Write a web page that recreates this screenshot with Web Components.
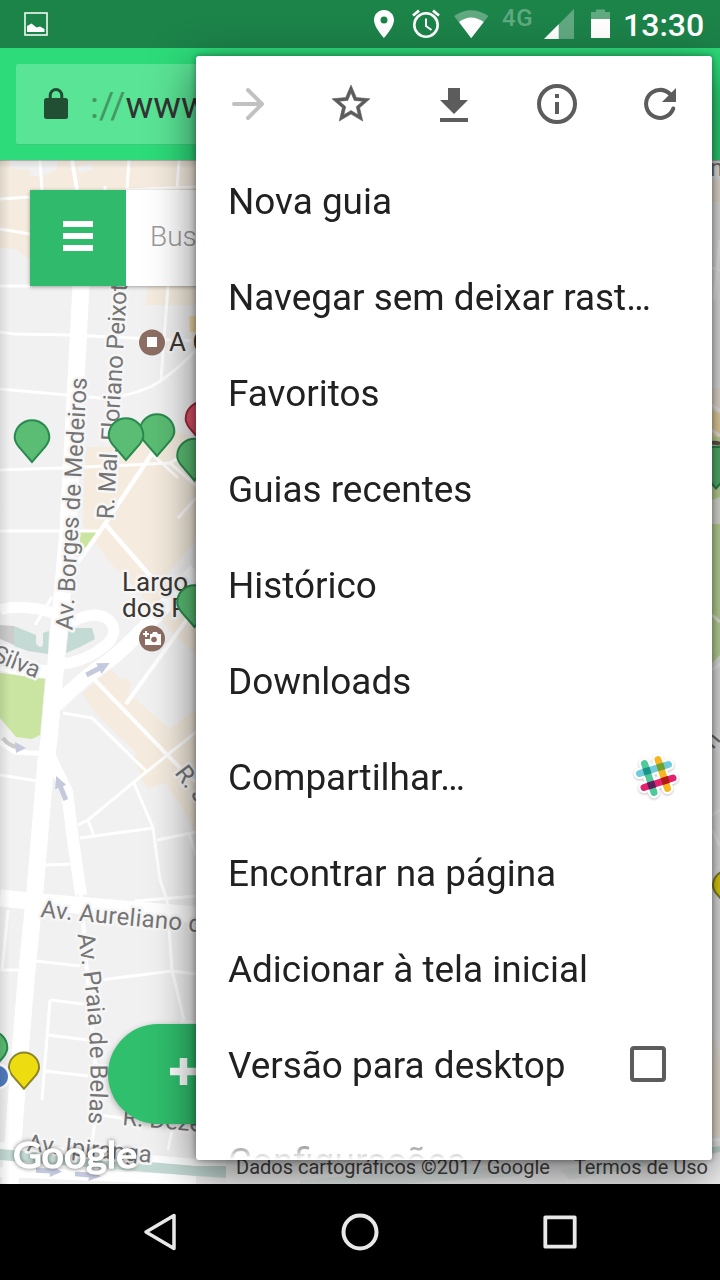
<!DOCTYPE html>
<html lang="pt-BR">
<head>
<meta charset="utf-8">
<title>Mapa</title>
<style>
  body { margin: 0; background: #000; font-family: Roboto, "Liberation Sans", sans-serif; }
</style>
</head>
<body>
<phone-screen></phone-screen>
<script>
const define = (name, html) => {
  const t = document.createElement('template');
  t.innerHTML = html;
  customElements.define(name, class extends HTMLElement {
    constructor() {
      super();
      this.attachShadow({ mode: 'open' }).append(t.content.cloneNode(true));
    }
  });
};

define('status-bar', `
<style>
  :host { display: flex; height: 48px; box-sizing: border-box; padding: 0 16px 0 24px; background: #1c8349; color: #fff; align-items: flex-start; }
  svg { display: block; flex: none; }
  .gap { flex: 1; }
  .net { font: 500 24px/24px Roboto, sans-serif; color: #61a981; margin: 6px 9px 0 13px; width: 33px; letter-spacing: .5px; }
  time { font: 500 32px/48px Roboto, sans-serif; margin: 1px 0 0 12px; width: 81px; }
</style>
<svg width="24" height="48"><rect x="1" y="13" width="22" height="22" fill="none" stroke="#e4f1e9" stroke-width="1.7"/><path d="M3 32V26L7.5 23.5 12.5 27.5 16 26.5 20.5 29V32Z" fill="#fff"/></svg>
<span class="gap"></span>
<svg width="20" height="48"><path fill="#fff" fill-rule="evenodd" d="M10 10C4.3 10 0 14.400 0 20c0 7.300 10 18 10 18s10-10.700 10-18c0-5.600-4.300-10-10-10zm0 6.400a3.500 3.500 0 1 1 0 7 3.500 3.500 0 0 1 0-7z"/></svg>
<svg width="28" height="48" style="margin-left:18px" fill="none" stroke="#fff"><circle cx="14" cy="25" r="11.700" stroke-width="2.600"/><path d="M14 18.500V26l5.500 4" stroke-width="2"/><path d="M1 15.500 7 10.700M27 15.500 21 10.700" stroke-width="2.800"/></svg>
<svg width="35" height="48" style="margin-left:14px"><path d="M0 16Q17 4.500 34.500 16L17.200 38Z" fill="#61a981"/><path d="M5 22Q17 13 29.700 22L17.200 38.300Z" fill="#fff"/></svg>
<span class="net">4G</span>
<svg width="30" height="48"><path d="M30 9V39H0Z" fill="#61a981"/><path d="M14.700 24.300V39H0Z" fill="#fff"/></svg>
<svg width="20" height="48" style="margin-left:17px"><path d="M0 12H5V9.500H14V12H19V20H0Z" fill="#61a981"/><path d="M0 19H19V38H0Z" fill="#fff"/></svg>
<time>13:30</time>
`);

define('url-toolbar', `
<style>
  :host { display: block; height: 112px; box-sizing: border-box; padding: 16px; background: #2ddb7a; }
  .field { height: 80px; background: #5ae495; border-radius: 2px; box-shadow: 0 1px 0 #3fc97b; display: flex; align-items: center; box-sizing: border-box; padding-left: 28px; }
  svg { display: block; margin-right: 20px; }
  .url { font-size: 37px; line-height: 44px; color: #333; white-space: pre; padding: 3px 0 0 2px; }
  .url i { font-style: normal; color: #459765; }
</style>
<div class="field">
  <svg width="24" height="32"><path d="M6.200 11V7.500a5.800 6 0 0 1 11.600 0V11" fill="none" stroke="#214f34" stroke-width="3"/><rect y="10" width="24" height="21" rx="2.500" fill="#214f34"/></svg>
  <span class="url"><i>://</i>www</span>
</div>
`);

define('street-map', `
<style>
  :host { display: block; height: 1024px; background: #f1f1f1; overflow: hidden; }
  svg { display: block; }
  text { font-family: Roboto, sans-serif; font-size: 24px; fill: #757575; paint-order: stroke; stroke: #f6f6f6; stroke-width: 5px; stroke-linejoin: round; }
  .poi { font-size: 26px; fill: #3c3732; }
  .logo { font: 400 36px Lato, sans-serif; fill: #fff; stroke: #fff; stroke-width: 1.500px; filter: drop-shadow(0 0 2px rgba(0,0,0,.55)); }
</style>
<svg width="720" height="1024" viewBox="0 160 720 1024">
  <defs>
    <path id="pin" d="M0 24.500L-13.500 9C-16 5.500-17.300 3-17.300 0A17.300 17.300 0 0 1 17.300 0C17.300 3 16 5.500 13.500 9Z"/>
    <path id="belas" d="M77.500 934Q96 1045 88 1126"/>
    <path id="arrow" d="M-13-2.500H1V-6L13 0 1 6V2.500H-13Z" fill="#c5c9dd"/>
    <linearGradient id="top" x1="0" y1="0" x2="0" y2="1"><stop stop-color="#555" stop-opacity=".6"/><stop offset=".2" stop-color="#777" stop-opacity=".15"/><stop offset="1" stop-opacity="0"/></linearGradient>
    <linearGradient id="side"><stop stop-opacity=".1"/><stop offset="1" stop-opacity="0"/></linearGradient>
  </defs>
  <g fill="#f5ecdf">
    <path d="M0 160H196V190H40V262L24 256 16 249 0 248Z"/>
    <path d="M148 286H196V305H145Z"/>
    <path d="M87 447H125L160 428 188 435 184 458 196 470V540L163 580 196 612V655L170 630 140 593 113 566 95 542 83 525 84 470Z"/>
    <path d="M82 694L110 669 122 680 126 677 132 685 128 692 169 729 196 709V835L185 812 165 783 148 789 142 780 134 757 137 753 110 728 95 712Z"/>
    <path d="M712 180H720V202H712ZM712 388H720V412H712ZM712 1030L720 1060V1137H712Z"/>
  </g>
  <path d="M189 316H196V332H190ZM712 410L720 414V437H712Z" fill="#f6e0ab"/>
  <path d="M10 160H57V170L43 176H30V170L10 168ZM77 167L92 163V170L78 173Z" fill="#f1f1f1"/>
  <g fill="#cae5a2"><path d="M80 531H98L80 556Z"/><path d="M0 673L45 679 40 735 32 739 16 737 0 718Z"/><path d="M712 437H720V655L712 663Z"/></g>
  <path d="M712 500L720 497V524H712Z" fill="#eef0e6"/>
  <g fill="none" stroke="#fff" stroke-width="3">
    <path d="M40 160L42 190M129 160L127 190M179 160L177 190M0 199L30 197M0 229L30 234M127 190L196 187M0 286H30M105 186V190"/>
    <path d="M72 160L77 190" stroke-width="4"/>
    <path d="M0 332L15 334 70 335 196 341M0 389L100 398Q125 398 150 387 170 377 196 350M168 286L161 380M0 470L62 468 130 465 170 463 196 486M170 463L188 452M153 455L178 478M0 531H98"/>
    <path d="M153 452L105 524 78 562M105 524L152 578" stroke-width="4.500"/>
    <path d="M178 518L196 498M52 597L35 625"/>
    <path d="M0 610Q12 606 30 608 48 609 62 618M70 623Q95 609 109 620 120 632 106 645 85 662 62 664" stroke-width="11"/>
    <path d="M0 664Q25 672 62 672" stroke-width="13"/>
    <path d="M56 705Q85 676 110 660 140 636 196 570" stroke-width="15"/>
    <path d="M0 742L15 752 50 754" stroke-width="5"/>
    <path d="M81 286L76 380 68 530 58 640 49 740 46 760 35 890 26 980 17 1090 10 1184" stroke-width="17"/>
    <path d="M46 748L67 792 73 840 81 895" stroke-width="12"/>
    <path d="M81 895L86 960 100 1115M90 675L180 768 196 782M126 704L188 618" stroke-width="4"/>
    <path d="M78 825L88 820 145 773 196 732M63 713L92 718 146 771M88 820L94 836M80 838L153 828M134 783L153 828 160 880 167 900M157 840L196 832M189 833L196 855M0 775L37 781M45 865L73 864"/>
    <path d="M0 898L40 902 196 915" stroke-width="17"/>
    <path d="M135 901L196 896M167 900L172 970 185 1024M100 980L172 971 196 974M36 961L80 966M8 910L2 970H20M50 1000L84 1004M50 1000L42 1100M47 1035L88 1040M45 1071L88 1076M100 1115L150 1122M95 1120L90 1160M172 1130L168 1150M180 1022H196"/>
    <path d="M0 1146L196 1163 240 1163" stroke-width="8"/>
    <path d="M0 1172L196 1180" stroke-width="10"/>
    <path d="M712 268L720 270M714 300L720 240M712 615L720 622M712 405L720 411M712 430L720 436M712 670L720 664M712 1140H720M712 815L720 810M712 830L720 846" stroke-width="3" stroke-opacity=".8"/>
  </g>
  <path d="M14 626L36 635V643Q40 650 43 645V633L49 631 48 654 28 651 14 646ZM69 628L92 628 95 639 80 647 66 653Z" fill="#c4dad4"/>
  <path d="M0 625L14 626V645L0 639Z" fill="#ccc"/>
  <path d="M0 1149L196 1166H226V1178L196 1176 0 1160ZM300 1180L400 1172 520 1166V1176L400 1184H300ZM560 1170L720 1146V1152L570 1180Z" fill="#c4dad4"/>
  <use href="#arrow" transform="translate(98 669) rotate(-27)"/>
  <use href="#arrow" transform="translate(61 788) rotate(-112)"/>
  <path d="M3 738Q8 745 16 747" fill="none" stroke="#ccc" stroke-width="4"/><path d="M15 742L26 748 16 753Z" fill="#c5c9dd"/>
  <use href="#arrow" transform="translate(49 1171) rotate(3)"/><use href="#arrow" transform="translate(88 1175) rotate(5)"/>

  <text transform="translate(72.500 630.500) rotate(-86.700)" textLength="253">Av. Borges de Medeiros</text>
  <text transform="translate(113.500 519.500) rotate(-86.700)" textLength="236">R. Mal. Floriano Peixot</text>
  <text transform="translate(-9 660) rotate(22)" textLength="49">Silva</text>
  <text transform="translate(174 773) rotate(53)">R. Jo</text>
  <text transform="translate(40 917) rotate(5.400)" textLength="162">Av. Aureliano d</text>
  <text><textPath href="#belas" textLength="190">Av. Praia de Belas</textPath></text>
  <text transform="translate(122 1125) rotate(5)">R. Deze</text>
  <text transform="translate(26.500 1151) rotate(5.400)" textLength="125">Av. Ipiranga</text>
  <text x="710" y="176">n</text>
  <text transform="translate(713 750) rotate(-50)">n</text>
  <text class="poi" x="169" y="351">A C</text>
  <text class="poi" x="122" y="591">Largo</text>
  <text class="poi" x="122" y="617">dos P</text>

  <circle cx="152" cy="342.500" r="13" fill="#8d6e63"/><path d="M147 337H157V347H147Z" fill="#fff"/>
  <circle cx="152" cy="638.500" r="13" fill="#8d6e63"/>
  <path d="M150 634H152L153 632H157L158 634H161V645H145V639H150Z" fill="#fff"/><circle cx="154" cy="639.500" r="2.800" fill="#8d6e63"/><path d="M146 631V637M143 634H149" stroke="#fff" stroke-width="2"/>

  <path d="M712 443Q716 442 720 444" fill="none" stroke="#6d5650" stroke-width="4"/>
  <g fill="#5bbd73" stroke="#2a8a50" stroke-width="2">
    <use href="#pin" x="157" y="431.500"/><use href="#pin" x="126" y="435.500"/><use href="#pin" x="32" y="437.500"/>
    <use href="#pin" x="194.500" y="456"/><use href="#pin" x="194.500" y="602.500"/><use href="#pin" x="-10" y="1048"/>
    <use href="#pin" x="716" y="464"/>
  </g>
  <use href="#pin" x="203" y="419" fill="#dc5468" stroke="#a32a3c" stroke-width="2"/>
  <g fill="#ecdc10" stroke="#8c8428" stroke-width="2.300"><use href="#pin" transform="translate(24 1067.500) scale(.87)"/><use href="#pin" transform="translate(728 885.500) scale(.87)"/></g>
  <circle cx="-3" cy="1076.500" r="13.500" fill="#fff"/><circle cx="-3" cy="1076.500" r="11" fill="#507cc0"/>
  <text class="logo" x="13" y="1168" textLength="124" lengthAdjust="spacingAndGlyphs">Google</text>
  <rect y="160" width="720" height="8" fill="url(#top)"/>
  <rect y="160" width="10" height="1024" fill="url(#side)"/>
</svg>
`);

define('search-card', `
<style>
  :host { display: flex; height: 96px; background: #fff; box-shadow: 0 1px 4px rgba(0,0,0,.35); }
  .menu { width: 96px; background: #30bb6c; box-sizing: border-box; padding-bottom: 4px; display: flex; flex-direction: column; justify-content: center; align-items: center; gap: 6px; }
  .menu i { width: 30px; height: 6px; background: #fff; }
  .ph { padding-left: 24px; font: 300 28px/94px Roboto, sans-serif; color: #999; }
</style>
<div class="menu"><i></i><i></i><i></i></div><span class="ph">Bus</span>
`);

define('add-button', `
<style>
  :host { display: flex; align-items: center; height: 100px; box-sizing: border-box; padding-left: 62px; border-radius: 50px; background: #30bf6d; box-shadow: 0 2px 6px rgba(0,0,0,.3); }
  svg { display: block; margin-top: -6px; }
</style>
<svg width="27" height="27"><path d="M0 13.500H27M13.500 0V27" stroke="#fff" stroke-width="7.500"/></svg>
`);

define('map-credits', `
<style>
  :host { display: flex; justify-content: space-between; height: 28px; box-sizing: border-box; padding: 0 12px 0 10px; background: rgba(245,245,245,.7); color: #444; font-size: 20px; line-height: 22px; white-space: nowrap; }
</style>
<span>Dados cartográficos ©2017 Google</span><span>Termos de Uso</span>
`);

define('menu-item', `
<style>
  :host { display: flex; align-items: center; justify-content: space-between; height: 96px; flex: none; box-sizing: border-box; padding: 2px 32px 0; font-size: 36.900px; color: #212121; white-space: nowrap; }
</style>
<span><slot></slot></span><slot name="end"></slot>
`);

define('options-menu', `
<style>
  :host { display: flex; flex-direction: column; overflow: hidden; background: #fff; border-radius: 3px; box-shadow: 0 0 6px rgba(0,0,0,.4), 0 14px 46px rgba(0,0,0,.56); }
  nav { display: flex; height: 96px; flex: none; align-items: center; }
  nav span { flex: 1; display: flex; justify-content: center; }
  svg { display: block; }
  .list { flex: 1; min-height: 0; overflow: hidden; display: flex; flex-direction: column; -webkit-mask-image: linear-gradient(#000 calc(100% - 32px), transparent); mask-image: linear-gradient(#000 calc(100% - 32px), transparent); }
  .slack { margin: 0 -4px 0 0; }
  .box { box-sizing: border-box; width: 36px; height: 36px; border: 4px solid #5c5c5c; border-radius: 4px; margin: -2px 14px 0 0; }
</style>
<nav>
  <span><svg width="48" height="48" fill="none" stroke="#c1c1c1" stroke-width="4" stroke-linecap="round" stroke-linejoin="round"><path d="M10 24H38M24 10L38 24 24 38"/></svg></span>
  <span><svg width="48" height="48"><path transform="translate(1.200 1.200) scale(1.900)" fill="#5c5c5c" stroke="#5c5c5c" stroke-width=".3" d="M22 9.240l-7.190-.62L12 2 9.190 8.630 2 9.240l5.460 4.730L5.820 21 12 17.270 18.180 21l-1.630-7.030L22 9.240zM12 15.400l-3.760 2.270 1-4.280-3.320-2.880 4.380-.38L12 6.100l1.710 4.040 4.380.38-3.320 2.880 1 4.280L12 15.400z"/></svg></span>
  <span><svg width="48" height="48"><path fill="#5c5c5c" d="M18 8H30V20H38L24 34 10 20H18ZM10 38H38V42H10Z"/></svg></span>
  <span><svg width="48" height="48"><circle cx="24" cy="24" r="18" fill="none" stroke="#5c5c5c" stroke-width="4"/><path fill="#5c5c5c" d="M22 14H26V18H22ZM22 22H26V34H22Z"/></svg></span>
  <span><svg width="48" height="48"><path d="M37.300 28.500A14 14 0 1 1 34 14" fill="none" stroke="#5c5c5c" stroke-width="4" stroke-linecap="round"/><path d="M40 8V22H26Z" fill="#5c5c5c"/></svg></span>
</nav>
<div class="list">
  <menu-item>Nova guia</menu-item>
  <menu-item>Navegar sem deixar rast…</menu-item>
  <menu-item>Favoritos</menu-item>
  <menu-item>Guias recentes</menu-item>
  <menu-item>Histórico</menu-item>
  <menu-item>Downloads</menu-item>
  <menu-item>Compartilhar…
    <svg class="slack" slot="end" width="56" height="48" viewBox="628 753 56 48" fill="none" stroke-linecap="round">
      <path style="filter:drop-shadow(0 1px 1px rgba(0,0,0,.25))" stroke="#fff" stroke-width="11.500" d="M644.500 763.500L654 792.500M658 759.500L667.500 788.500M639.500 773.500L668.500 764.500M644 787.500L673 778"/>
      <g stroke-width="7">
        <path stroke="#4cca98" d="M644.500 763.500L654 792.500"/><path stroke="#f8b51f" d="M658 759.500L667.500 788.500"/>
        <path stroke="#70cbdc" d="M639.500 773.500L668.500 764.500"/><path stroke="#e4216f" d="M644 787.500L673 778"/>
      </g>
      <g stroke-linecap="butt" stroke-width="7">
        <path stroke="#1a9487" d="M643.500 772.200L650.500 770.100"/><path stroke="#71a12b" d="M657.200 768L664.200 765.800"/>
        <path stroke="#591f5b" d="M648 786.200L655 783.900"/><path stroke="#b31a16" d="M661.800 781.700L668.800 779.400"/>
      </g>
    </svg>
  </menu-item>
  <menu-item>Encontrar na página</menu-item>
  <menu-item>Adicionar à tela inicial</menu-item>
  <menu-item>Versão para desktop<div class="box" slot="end"></div></menu-item>
  <menu-item>Configurações</menu-item>
</div>
`);

define('nav-bar', `
<style>
  :host { display: flex; height: 96px; background: #000; justify-content: center; align-items: center; gap: 160px; }
  svg { display: block; }
</style>
<svg width="40" height="40" fill="none" stroke="#e8e8e8" stroke-width="3.500" stroke-linejoin="round"><path d="M34 3.500V36.500L6 20Z"/></svg>
<svg width="40" height="40" fill="none" stroke="#e8e8e8" stroke-width="4"><circle cx="20" cy="20" r="16.500"/></svg>
<svg width="40" height="40" fill="none" stroke="#e8e8e8" stroke-width="3.800" stroke-linejoin="round"><path d="M5.300 5.300H34.700V34.700H5.300Z"/></svg>
`);

define('phone-screen', `
<style>
  :host { display: flex; flex-direction: column; width: 720px; height: 1280px; position: relative; overflow: hidden; }
  search-card, add-button, map-credits, options-menu { position: absolute; }
  search-card { left: 30px; right: 30px; top: 190px; }
  add-button { left: 108px; right: 108px; top: 1024px; }
  map-credits { left: 226px; right: 0; top: 1156px; }
  options-menu { left: 196px; top: 56px; width: 516px; height: 1104px; }
  nav-bar { position: relative; }
</style>
<status-bar></status-bar>
<url-toolbar></url-toolbar>
<street-map></street-map>
<search-card></search-card>
<add-button></add-button>
<map-credits></map-credits>
<options-menu></options-menu>
<nav-bar></nav-bar>
`);
</script>
</body>
</html>
